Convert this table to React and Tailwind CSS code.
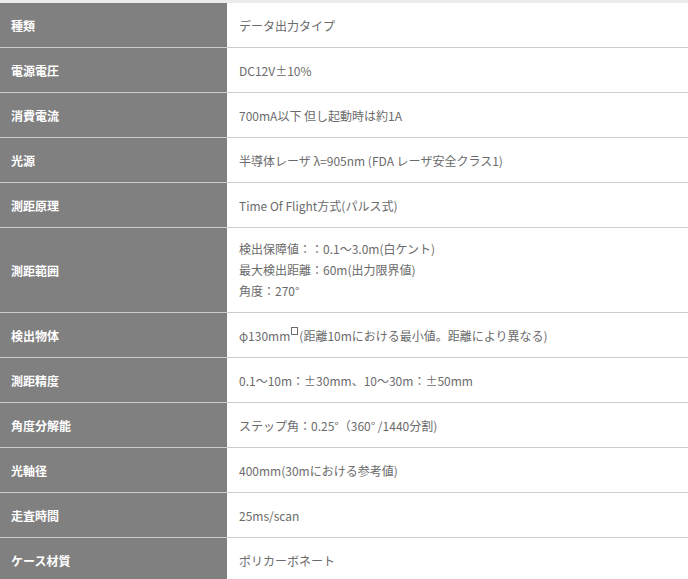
const specs = [
  { label: "種類", value: ["データ出力タイプ"] },
  { label: "電源電圧", value: ["DC12V±10%"] },
  { label: "消費電流", value: ["700mA以下 但し起動時は約1A"] },
  { label: "光源", value: ["半導体レーザ λ=905nm (FDA レーザ安全クラス1)"] },
  { label: "測距原理", value: ["Time Of Flight方式(パルス式)"] },
  {
    label: "測距範囲",
    value: ["検出保障値：：0.1〜3.0m(白ケント)", "最大検出距離：60m(出力限界値)", "角度：270°"],
  },
  { label: "検出物体", value: null },
  { label: "測距精度", value: ["0.1〜10m：±30mm、10〜30m：±50mm"] },
  { label: "角度分解能", value: ["ステップ角：0.25°（360° /1440分割)"] },
  { label: "光軸径", value: ["400mm(30mにおける参考値)"] },
  { label: "走査時間", value: ["25ms/scan"] },
  { label: "ケース材質", value: ["ポリカーボネート"] },
];

export default function App() {
  return (
    <div
      className="w-[688px] h-[579px] overflow-hidden bg-white text-[12px] leading-[21px]"
      style={{ fontFamily: '"Noto Sans CJK JP", "Liberation Sans", sans-serif' }}
    >
      <div className="h-[3px] bg-[#ebebeb]" />
      {specs.map((row) => {
        const multi = row.value && row.value.length > 1;
        return (
          <div key={row.label} className="flex border-b border-[#cccccc]">
            <div className="w-[227px] shrink-0 bg-[#808080] flex items-center font-bold text-white pl-[11px] pr-3">
              {row.label}
            </div>
            <div
              className={
                multi
                  ? "flex-1 text-[#6b6b6b] pl-[12px] pr-3 pt-[10px] pb-[11px]"
                  : "flex-1 text-[#6b6b6b] pl-[12px] pr-3 pt-3 pb-[11px]"
              }
            >
              {row.value ? (
                row.value.map((line) => <div key={line}>{line}</div>)
              ) : (
                <div>
                  φ130mm
                  <span className="inline-block w-[7px] h-[8px] border border-[#6b6b6b] align-[6px] mx-[1px]" />
                  (距離10mにおける最小値。距離により異なる)
                </div>
              )}
            </div>
          </div>
        );
      })}
    </div>
  );
}
